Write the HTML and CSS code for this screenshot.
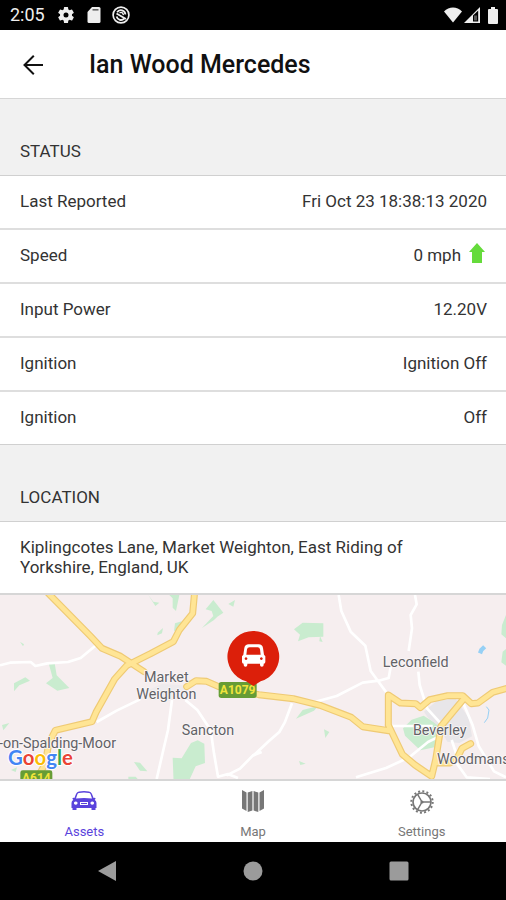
FILE: index.html
```html
<!DOCTYPE html>
<html lang="en">
<head>
<meta charset="utf-8">
<meta name="viewport" content="width=device-width, initial-scale=1">
<title>Ian Wood Mercedes</title>
<link rel="stylesheet" href="styles.css">
</head>
<body>
<div class="status-bar">
  <span class="clock">2:05</span>
  <svg class="status-icon" viewBox="0 0 24 24" width="20" height="20" fill="currentColor"><path d="M19.14 12.94a7 7 0 0 0 0-1.88l2.03-1.58a.5.5 0 0 0 .12-.61l-1.92-3.32a.5.5 0 0 0-.59-.22l-2.39.96a7 7 0 0 0-1.62-.94l-.36-2.54a.5.5 0 0 0-.48-.41h-3.84a.5.5 0 0 0-.47.41l-.36 2.54a7 7 0 0 0-1.62.94l-2.39-.96a.5.5 0 0 0-.59.22L2.74 8.87a.5.5 0 0 0 .12.61l2.03 1.58a7 7 0 0 0 0 1.88l-2.03 1.58a.5.5 0 0 0-.12.61l1.92 3.32c.12.22.37.29.59.22l2.39-.96c.5.38 1.03.7 1.62.94l.36 2.54c.05.24.24.41.48.41h3.84c.24 0 .44-.17.47-.41l.36-2.54a7 7 0 0 0 1.62-.94l2.39.96c.22.08.47 0 .59-.22l1.92-3.32a.5.5 0 0 0-.12-.61zM12 15a3 3 0 1 1 0-6 3 3 0 0 1 0 6z"/></svg>
  <svg class="status-icon" viewBox="0 0 14 16" width="14" height="16"><path d="M5 0h7a1.500 1.500 0 0 1 1.500 1.500v13A1.500 1.500 0 0 1 12 16H2a1.500 1.500 0 0 1-1.500-1.500V5z" fill="currentColor"/><path d="M5.500 2.800h6" stroke="#666" stroke-width="1.600"/></svg>
  <svg class="status-icon" viewBox="0 0 18 18" width="18" height="18" fill="none" stroke="currentColor"><circle cx="9" cy="9" r="7.900" stroke-width="1.700"/><path d="M4.600 10.500a4.600 4.600 0 0 0 7.600 2.200M13.400 8.500a4.500 4.500 0 0 0-8.300-2.200M4.500 7.500l9.500 5.500" stroke-width="1.800"/><path d="M7.500 6.800q3-1.500 4 2.400" stroke-width="1.400"/></svg>
  <span class="status-right">
    <svg viewBox="0 0 18 16" width="18" height="16" fill="currentColor"><path d="M0 4.500C5-1 13-1 18 4.500L9 15.500z"/></svg>
    <svg viewBox="0 0 16 16" width="16" height="16"><path d="M0 16 16 0v16z" fill="currentColor"/><path d="M9 8.500 14.200 3.500V14.500H9z" fill="#000"/><path d="M10 8.500h3v5h-3z" fill="#555"/></svg>
    <svg class="battery" viewBox="0 0 10 17" width="10" height="17" fill="currentColor"><path d="M3 0h4v2h2a1 1 0 0 1 1 1v13a1 1 0 0 1-1 1H1a1 1 0 0 1-1-1V3a1 1 0 0 1 1-1h2z"/></svg>
  </span>
</div>

<header class="header">
  <button class="back" type="button" aria-label="Back"><svg viewBox="0 0 20 20" width="20" height="20" fill="none" stroke="currentColor" stroke-width="2"><path d="M20 10H1.500M10.800 .8 1.500 10l9.300 9.200"/></svg></button>
  <h1 class="title">Ian Wood Mercedes</h1>
</header>

<main class="content">
  <h2 class="section-title">STATUS</h2>
  <dl class="list">
    <div class="row"><dt>Last Reported</dt><dd>Fri Oct 23 18:38:13 2020</dd></div>
    <div class="row"><dt>Speed</dt><dd>0 mph <svg class="arrow" viewBox="0 0 16 20" width="16" height="20" fill="#65db3b"><path d="M8 0 16 9h-3v11H3V9H0z"/></svg></dd></div>
    <div class="row"><dt>Input Power</dt><dd>12.20V</dd></div>
    <div class="row"><dt>Ignition</dt><dd>Ignition Off</dd></div>
    <div class="row"><dt>Ignition</dt><dd>Off</dd></div>
  </dl>
  <h2 class="section-title">LOCATION</h2>
  <p class="address">Kiplingcotes Lane, Market Weighton, East Riding of Yorkshire, England, UK</p>

  <svg class="map" viewBox="0 15 1518 552" preserveAspectRatio="xMidYMid slice" role="img" aria-label="Map of the asset location">
    <rect y="-400" width="1518" height="1400" fill="#f6eeef"/>
    <g fill="#c9eccf">
      <path d="m445 15 15 20 18 3-12 10zM508 15h30l-10 48-10-10v-28zM640 30l30 38-18 12-10 10-36 24 34-36-5-15-18-5zM685 42l20-12-5 20zM525 100l20-6-5 20-18 10zM473 128l16-14-3 16-14 6zM60 155l12 8-3 6zM146 220h18l6 36 38 38-36 8-34-22 20-16zM42 280l34-18 14 10-32 14-16 18zM6 405l22-6-18 22zM545 505l28-46 20-8 20 10 2 58-28 10-24 52h-42l-3-78zM402 516l18 2 22 26-22-2zM385 560h22l6 7h-28zM33 540l18-8-4 14z"/>
      <path d="m882 118 26-20 62 2v40l-44 2-32 12 6-20zM960 138l8 18-10-2zM888 386l20-26 46-12-12 14zM972 418l16 8-12 18zM897 513l20 8-16 4zM1209 415l26-26 36-12 44 28-8 66-46 10-46-44zM1506 105l12-30v70l-14-12zM1508 185l10-8v50l-14-10z"/>
    </g>
    <path d="m1272 365 38-32 56-8 40 58 10 56-38 20-36-4-26-46-32-26z" fill="#e8e6e9"/>
    <path d="m440 302 46-20 62 4 20 30-60 16-60-4z" fill="#eeebed"/>
    <g fill="none" stroke="#fff" stroke-width="8" stroke-linejoin="round">
      <path d="m0 226 30-8 62-2 14 12 36-8 62-4 38-12 46-38M290 396l60-34 70-34M516 330l-12 90-14 60-20 87M556 330l36 30 40 60 10 70 12 70 30-8 30 12M680 556l40-20 39-40 26-10"/>
      <path d="m1016 15 8 48 28 62 44 42 16 76 50 68M1245 15l5 28-18 32 4 40-10 68M1255 245l4 40 22 70 50 55M930 340l80-22 78-40 48-6 30-8 8-44M876 340l-22 58-16 28-32 28-47 44M1168 408h130M1068 562l90-28 70-32 56-46 40-20M1390 340l28 66 18 62 46 76 36 18M1370 520l30 42 70 5M1355 450l20 60"/>
    </g>
    <g fill="none" stroke="#96d0f5"><path d="m1454 170-10 10-4 10" stroke-width="13"/><path d="m1459 350 8 10-4 24-10 14" stroke-width="3"/></g>
    <g fill="none" stroke-linejoin="round" stroke-linecap="round">
      <path stroke="#efca74" stroke-width="21" d="m140 5 130 132 36 38 56 24 70 46M584 5l-6 65-40 50-18 35-68 36-72 36-36 40-56 100-12 28-110 26-20 40-10 60-26 46M560 290l28-18 32 2 36 16 120 24 104 12 80 20 94 36 34 28 78 12M1165 405v-90l36 24 46 2 14 12 28-24 54-12h45l26 24 20-2 44-32 66-18 28-2M1165 405l42 88 38 32 50 34 12-50 16-100 68-82M1314 519l36 0 22-16 14-28 26-14"/>
      <path stroke="#ffe595" stroke-width="14" d="m140 5 130 132 36 38 56 24 70 46M584 5l-6 65-40 50-18 35-68 36-72 36-36 40-56 100-12 28-110 26-20 40-10 60-26 46M560 290l28-18 32 2 36 16 120 24 104 12 80 20 94 36 34 28 78 12M1165 405v-90l36 24 46 2 14 12 28-24 54-12h45l26 24 20-2 44-32 66-18 28-2M1165 405l42 88 38 32 50 34 12-50 16-100 68-82M1314 519l36 0 22-16 14-28 26-14"/>
    </g>
    <path d="M656 284q0-8 8-8h98q8 0 8 8v32q0 8-8 8h-98q-8 0-8-8z" fill="#669c35"/>
    <text class="road-label" x="713" y="313" text-anchor="middle">A1079</text>
    <rect x="61" y="541" width="96" height="45" rx="7" fill="#669c35"/>
    <text class="road-label" x="109" y="575" text-anchor="middle">A614</text>
    <g class="places">
      <text x="499" y="276" text-anchor="middle">Market</text>
      <text x="499" y="328" text-anchor="middle">Weighton</text>
      <text x="624" y="436" text-anchor="middle">Sancton</text>
      <text x="-3" y="474">-on-Spalding-Moor</text>
      <text x="1247" y="231" text-anchor="middle">Leconfield</text>
      <text x="1319" y="436" text-anchor="middle">Beverley</text>
      <text x="1311" y="523">Woodmansey</text>
    </g>
    <text class="google" x="24" y="524"><tspan fill="#4285f4">G</tspan><tspan fill="#ea4335">o</tspan><tspan fill="#fbbc05">o</tspan><tspan fill="#4285f4">g</tspan><tspan fill="#34a853">l</tspan><tspan fill="#ea4335">e</tspan></text>
    <path d="M760 123a77 77 0 0 1 22 151l-22 14-22-14a77 77 0 0 1 22-151z" fill="#dc1f0a"/>
    <path fill="#fff" fill-rule="evenodd" d="M746 163h30q11 0 13 11l3 20 4 5v17q0 5-5 5v4a5 5 0 0 1-11 0v-4h-38v4a5 5 0 0 1-11 0v-4q-5 0-5-5v-17l4-5 3-20q2-11 13-11zM749 172q-7 0-8 6l-2 16h43l-2-16q-1-6-7-6zM738 202a4 4 0 1 0 .1 0zM784 202a4 4 0 1 0 .1 0z"/>
  </svg>
</main>

<nav class="tabs">
  <a class="tab active" href="#assets">
    <svg viewBox="0 0 26 22" width="26" height="22"><path fill="currentColor" fill-rule="evenodd" d="M8 1.500Q13 .4 18 1.500q2 .4 2.900 2.200L22.600 8l1.200-.2q1 .3.700 1.200l-.8.700Q25.500 11 25.500 13v5h-1v2h-4v-2h-15v2h-4v-2h-1v-5q0-2 1.800-3.300L1.500 9Q1.200 8 2.200 7.800l1.200.2 1.700-4.300Q6 1.900 8 1.500zM8 3q-1 .1-1.600 1.300L5 8.400q8-1 16 0l-1.400-4.100Q19 3.100 18 3q-5-.8-10 0zM4.700 11.500a1.800 1.600 0 1 0 .1 0zM21.200 11.500a1.800 1.600 0 1 0 .1 0zM9 12v3h8v-3z"/><path stroke="currentColor" d="M10 13.500h6"/></svg>
    <span>Assets</span>
  </a>
  <a class="tab" href="#map">
    <svg viewBox="0 0 24 22" width="24" height="22" fill="currentColor"><path d="m1 0 4.500 2.500V21L1 18.500zM6.700 2.500l4.700-1.500V20.500L6.700 22zM12.600 1 17.300 2.500V22l-4.700-1.500zM18.500 2.500 23 0v18.500L18.500 21z"/></svg>
    <span>Map</span>
  </a>
  <a class="tab" href="#settings">
    <svg viewBox="0 0 24 24" width="24" height="24" fill="none" stroke="currentColor"><circle cx="12" cy="12" r="9" stroke-width="1.700"/><circle cx="12" cy="12" r="10.700" stroke-width="2" stroke-dasharray="2 2.202"/><circle cx="12" cy="12" r="1.600" fill="currentColor" stroke="none"/><path d="M12 12h9M12 12 7.500 4.200M12 12l-4.500 7.800" stroke-width="1.500"/></svg>
    <span>Settings</span>
  </a>
</nav>

<div class="system-nav">
  <button type="button" aria-label="System back"><svg viewBox="0 0 20 22" width="20" height="22" fill="currentColor"><path d="M19 1v20L1 11z"/></svg></button>
  <button type="button" aria-label="Home"><svg viewBox="0 0 20 20" width="20" height="20" fill="currentColor"><circle cx="10" cy="10" r="9.500"/></svg></button>
  <button type="button" aria-label="Recent apps"><svg viewBox="0 0 20 20" width="20" height="20" fill="currentColor"><rect x=".5" y=".5" width="19" height="19" rx="1.500"/></svg></button>
</div>
</body>
</html>
```
FILE: styles.css
```css
* {
  box-sizing: border-box;
}

body {
  margin: 0;
  min-height: 100vh;
  display: flex;
  flex-direction: column;
  background: #f1f1f1;
  color: #333;
  font: 17px/20px Roboto, sans-serif;
}

svg {
  display: block;
  flex: none;
}

button {
  padding: 0;
  border: 0;
  background: none;
  color: inherit;
}

.status-bar {
  display: flex;
  align-items: center;
  gap: 11px;
  height: 30px;
  padding: 0 8px 0 10px;
  background: #000;
  color: #eee;
}

.clock {
  font-size: 18px;
}

.status-right {
  display: flex;
  align-items: center;
  gap: 2px;
  margin-left: auto;
}

.battery {
  margin-left: 6px;
}

.header {
  display: flex;
  align-items: center;
  gap: 46px;
  height: 69px;
  padding: 2px 23px 0;
  background: #fff;
  border-bottom: 1px solid #d6d6d6;
  color: #111;
}

.title {
  margin: 0;
  font-size: 25px;
  line-height: 32px;
  font-weight: 500;
}

.content {
  flex: 1;
  display: flex;
  flex-direction: column;
}

.section-title {
  margin: 0;
  padding: 42px 20px 14px;
  border-bottom: 1px solid #d0d0d0;
  font-size: 17px;
  font-weight: 400;
}

.list {
  margin: 0;
  background: #fff;
  border-bottom: 1px solid #d0d0d0;
}

.row {
  display: flex;
  justify-content: space-between;
  padding: 15px 19px 17px 20px;
}

.row + .row {
  border-top: 2px solid #dedede;
}

.row dd {
  display: flex;
  gap: 8px;
  margin: 0;
}

.arrow {
  margin: -2px 2px 0 0;
}

.address {
  margin: 0;
  padding: 15px 60px 16px 20px;
  background: #fff;
  border-bottom: 2px solid #d6d6d6;
}

.map {
  flex: 1 1 184px;
  width: 100%;
  min-height: 0;
}

.places {
  font-size: 43px;
  fill: #626266;
  stroke: #fbf7f8;
  stroke-width: 5px;
  stroke-linejoin: round;
  paint-order: stroke;
}

.road-label {
  font-size: 36px;
  font-weight: 700;
  fill: #f0e43c;
}

.google {
  font: 500 61px Lato, sans-serif;
  font-weight: 700;
  stroke: #fff;
  stroke-width: 6px;
  paint-order: stroke;
}

.tabs {
  display: grid;
  grid-template-columns: repeat(3, 1fr);
  height: 63px;
  background: #fff;
  border-top: 2px solid #d6d6d6;
}

.tab {
  display: flex;
  flex-direction: column;
  align-items: center;
  justify-content: space-between;
  padding: 9px 0 2px;
  color: #777;
  font-size: 13px;
  line-height: 16px;
  text-decoration: none;
}

.tab.active {
  color: #5a43dc;
}

.system-nav {
  display: flex;
  justify-content: center;
  gap: 126px;
  height: 58px;
  background: #000;
  color: #9b9b9b;
}
```
